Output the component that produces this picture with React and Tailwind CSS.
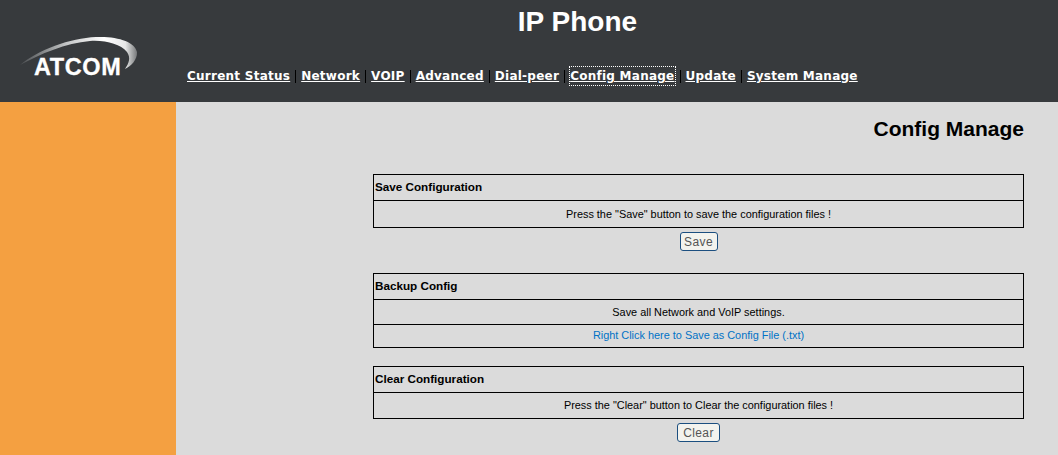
const navItems = ["Current Status","Network","VOIP","Advanced","Dial-peer","Config Manage","Update","System Manage"];

function Logo() {
  return (
    <svg width="176" height="102" viewBox="0 0 176 102" className="shrink-0">
      <defs>
        <linearGradient id="sw" x1="0" x2="1" y1="0" y2="0">
          <stop offset="0" stopColor="#4a4d50" />
          <stop offset="0.4" stopColor="#c4c6c7" />
          <stop offset="0.72" stopColor="#ffffff" />
          <stop offset="0.9" stopColor="#e6e7e7" />
          <stop offset="1" stopColor="#77797b" />
        </linearGradient>
      </defs>
      <path d="M20 65 C38 50 70 38 96 37 C118 36 135 42 137 52 C137.500 60 131 66 125 69 C129 63 131 58 127 52 C120 44 106 40 90 41 C66 43 40 54 20 65 Z" fill="url(#sw)" />
      <text x="34" y="75" fill="#fff" stroke="#fff" strokeWidth="0.3" fontFamily="'Liberation Sans',Arial,sans-serif" fontWeight="700" fontSize="23.500" letterSpacing="0.6">ATCOM</text>
    </svg>
  );
}

function Box({ children }) {
  return <div className="border border-black">{children}</div>;
}

function Row({ className = "", children }) {
  return <div className={`flex items-center justify-center text-[10.9px] text-black ${className}`}>{children}</div>;
}

function Head({ children }) {
  return <div className="h-[26px] flex items-center px-[1px] pb-[1px] text-[11.7px] font-bold text-black border-b border-black">{children}</div>;
}

function Btn({ children, className = "" }) {
  return (
    <button className={`block mx-auto h-[19px] rounded-[3px] border border-[#1c4f80] bg-[#f3f3ee] text-[12px] tracking-[0.4px] leading-none text-[#555] ${className}`}>
      {children}
    </button>
  );
}

export default function App() {
  return (
    <div className="w-[1058px] h-[455px] overflow-hidden bg-[#dbdbdb] font-['Liberation_Sans',Arial,sans-serif]">
      <header className="h-[102px] bg-[#373a3d] flex">
        <Logo />
        <div className="flex-1 flex flex-col pl-[11px]">
          <h1 className="h-[67px] pt-[5px] pr-[101px] pl-[11px] text-center text-[28px] leading-[34px] font-bold text-white">IP Phone</h1>
          <nav className="flex items-center h-[18px] font-['DejaVu_Sans',Verdana,sans-serif] text-[12px] font-bold text-white">
            {navItems.map((n, i) => (
              <span key={n} className="flex items-center">
                {i > 0 && <span className="w-[1px] h-[13px] bg-black mx-[5px]" />}
                <a href="#" className={`underline whitespace-nowrap tracking-[0.25px] ${n === "Config Manage" ? "outline-1 outline-dotted outline-white" : ""}`}>{n}</a>
              </span>
            ))}
          </nav>
        </div>
      </header>
      <div className="flex h-[353px]">
        <aside className="w-[176px] bg-[#f4a041]" />
        <main className="flex-1 pl-[197px] pr-[34px]">
          <h2 className="h-[72px] pt-[15px] text-right text-[21px] leading-[24px] font-bold text-black">Config Manage</h2>
          <Box>
            <Head>Save Configuration</Head>
            <Row className="h-[26px]">Press the "Save" button to save the configuration files !</Row>
          </Box>
          <div className="h-[45px] pt-[4px]"><Btn className="w-[38px]">Save</Btn></div>
          <Box>
            <Head>Backup Config</Head>
            <Row className="h-[25px] border-b border-black">Save all Network and VoIP settings.</Row>
            <Row className="h-[22px] pb-[2px]"><a href="#" className="text-[#0072c6]">Right Click here to Save as Config File (.txt)</a></Row>
          </Box>
          <div className="h-[18px]" />
          <Box>
            <Head>Clear Configuration</Head>
            <Row className="h-[25px]">Press the "Clear" button to Clear the configuration files !</Row>
          </Box>
          <div className="pt-[4px]"><Btn className="w-[43px]">Clear</Btn></div>
        </main>
      </div>
    </div>
  );
}
